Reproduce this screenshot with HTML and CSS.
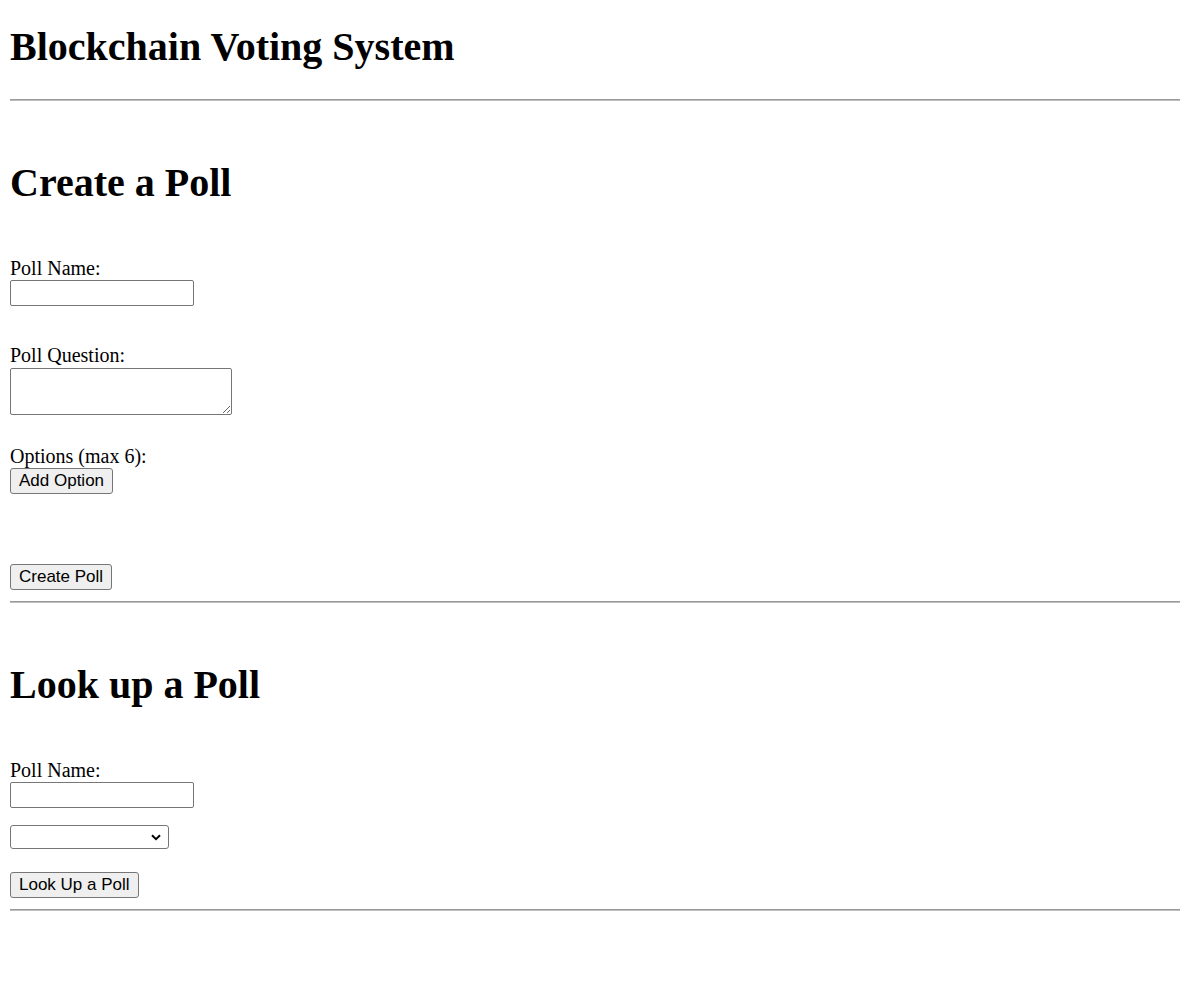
FILE: index.html
```html
<!DOCTYPE html>
<html lang="en">
<head>
<meta charset="utf-8">
<title>Blockchain Voting System</title>
<link rel="stylesheet" href="styles.css">
</head>
<body>
<h1 class="title">Blockchain Voting System</h1>
<hr class="rule rule-first">
<section class="panel">
  <h2 class="heading">Create a Poll</h2>
  <form class="form">
    <label class="label label-first" for="pollName">Poll Name:</label>
    <input class="field" id="pollName" type="text">
    <label class="label label-question" for="pollQuestion">Poll Question:</label>
    <textarea class="area" id="pollQuestion"></textarea>
    <label class="label label-options">Options (max 6):</label>
    <button class="btn" type="button">Add Option</button>
    <div class="options"></div>
    <button class="btn btn-submit" type="button">Create Poll</button>
  </form>
</section>
<hr class="rule">
<section class="panel">
  <h2 class="heading">Look up a Poll</h2>
  <form class="form">
    <label class="label label-first" for="lookupName">Poll Name:</label>
    <input class="field" id="lookupName" type="text">
    <span class="select-wrap">
      <select class="picker"><option></option></select>
      <svg class="chevron" width="10" height="7" viewBox="0 0 10 7" aria-hidden="true"><path d="M1 1.2 L5 5.2 L9 1.2" fill="none" stroke="#000" stroke-width="2"/></svg>
    </span>
    <button class="btn btn-lookup" type="button">Look Up a Poll</button>
  </form>
</section>
<hr class="rule">
</body>
</html>
```
FILE: styles.css
```css
html, body {
  margin: 0;
  background: #fff;
}
body {
  padding: 0 0 0 10px;
  font-family: "Liberation Serif", "Times New Roman", serif;
  font-size: 20px;
  color: #000;
}
.title, .heading {
  display: block;
  margin: 0;
  font-size: 40px;
  line-height: 46px;
  font-weight: bold;
}
.title {
  margin-top: 23.5px;
}
.rule {
  display: block;
  height: 0;
  margin: 11px 0 0 0;
  border: 0;
  border-top: 1px solid #9a9a9a;
  border-bottom: 1px solid #bdbdbd;
}
.rule-first {
  margin-top: 29.5px;
}
.heading {
  margin-top: 58.5px;
}
.form {
  display: flex;
  flex-direction: column;
  align-items: flex-start;
  margin: 0;
}
.label {
  display: block;
  line-height: 24px;
  font-size: 20px;
}
.label-first {
  margin-top: 50.5px;
}
.label-question {
  margin-top: 37px;
}
.label-options {
  margin-top: 29px;
}
.field {
  box-sizing: border-box;
  width: 184px;
  height: 26px;
  margin: 0;
  padding: 1px 3px;
  border: 1px solid #767676;
  border-radius: 2px;
  background: #fff;
  font-family: "Liberation Sans", Arial, sans-serif;
  font-size: 16px;
}
.area {
  box-sizing: border-box;
  width: 222px;
  height: 47px;
  margin: 1px 0 0 0;
  padding: 2px;
  border: 1px solid #767676;
  border-radius: 2px;
  background: #fff;
  font-family: "Liberation Mono", monospace;
  font-size: 16px;
}
.btn {
  box-sizing: border-box;
  height: 26px;
  margin: 0;
  padding: 0 8px;
  border: 1px solid #767676;
  border-radius: 3px;
  background: #efefef;
  color: #000;
  font-family: "Liberation Sans", Arial, sans-serif;
  font-size: 17px;
  line-height: 22px;
}
.options {
  height: 0;
}
.btn-submit {
  margin-top: 70px;
}
.select-wrap {
  position: relative;
  display: block;
  width: 159px;
  height: 24px;
  margin-top: 17px;
}
.picker {
  -webkit-appearance: none;
  appearance: none;
  display: block;
  box-sizing: border-box;
  width: 159px;
  height: 24px;
  margin: 0;
  padding: 0 24px 0 4px;
  border: 1px solid #767676;
  border-radius: 3px;
  background: #fff;
  font-family: "Liberation Sans", Arial, sans-serif;
  font-size: 16.67px;
  color: #000;
}
.chevron {
  position: absolute;
  right: 8px;
  top: 9px;
  pointer-events: none;
}
.btn-lookup {
  margin-top: 23px;
}
```
